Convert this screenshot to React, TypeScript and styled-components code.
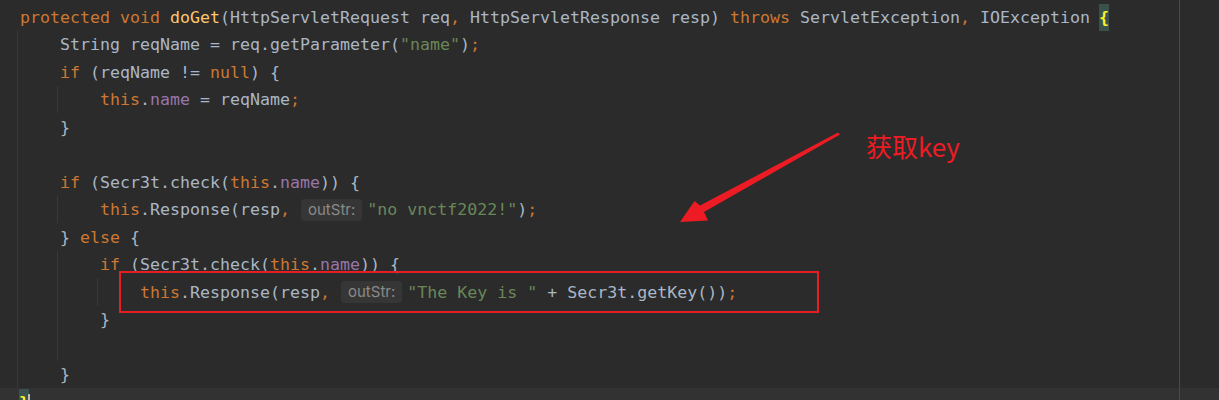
import React from "react";
import styled, { createGlobalStyle } from "styled-components";

type Kind = "kw" | "fn" | "txt" | "str" | "field";

type Token =
  | { k: Kind; t: string }
  | { k: "hint"; t: string }
  | { k: "brace"; t: string }
  | { k: "caret" };

interface LineData {
  indent: number;
  current?: boolean;
  tokens: Token[];
}

const LINE_H = 27.5;

const GlobalStyle = createGlobalStyle`
  html, body {
    margin: 0;
    padding: 0;
    background: #2b2b2b;
  }
  body {
    width: 1219px;
    height: 400px;
    overflow: hidden;
  }
`;

const colors: Record<Kind, string> = {
  kw: "#cc7832",
  fn: "#ffc66d",
  txt: "#a9b7c6",
  str: "#6a8759",
  field: "#9876aa",
};

const marginLine = (bg: string) =>
  `linear-gradient(to right, transparent 1179px, #494949 1179px, #494949 1180px, transparent 1180px), ${bg}`;

const Editor = styled.div`
  position: relative;
  width: 1219px;
  height: 400px;
  overflow: hidden;
  padding-top: 3px;
  box-sizing: border-box;
  background: ${marginLine("#2b2b2b")};
  font-family: "DejaVu Sans Mono", "Liberation Mono", monospace;
  font-size: 16.61px;
  color: #a9b7c6;
`;

const Line = styled.div<{ $current?: boolean }>`
  display: flex;
  align-items: stretch;
  height: ${LINE_H}px;
  line-height: ${LINE_H}px;
  padding-left: 17px;
  white-space: pre;
  background: ${(p) => (p.$current ? marginLine("#323232") : "transparent")};
`;

const Guide = styled.span`
  flex: 0 0 40px;
  box-sizing: border-box;
  border-left: 1px solid #393939;
`;

const Code = styled.span`
  display: flex;
  align-items: center;
  margin-left: 3px;
  padding-top: 1px;
`;

const Tok = styled.span<{ $kind: Kind }>`
  color: ${(p) => colors[p.$kind]};
`;

const Brace = styled.span`
  display: inline-block;
  width: 10px;
  height: ${LINE_H}px;
  margin-left: -1px;
  background: #3b514d;
  color: #ffef28;
  font-weight: bold;
`;

const Caret = styled.span`
  display: inline-block;
  width: 2px;
  height: 22px;
  margin-left: -1px;
  background: #bbbbbb;
  align-self: flex-end;
`;

const Hint = styled.span`
  display: inline-flex;
  align-items: center;
  height: 22px;
  margin: 0 5px 0 1px;
  padding: 0 7px;
  border-radius: 4px;
  background: #363636;
  color: #8a8a8a;
  font-family: Inter, "Noto Sans", sans-serif;
  font-size: 15px;
  line-height: 22px;
`;

const Highlight = styled.div`
  position: absolute;
  left: 119px;
  top: 271px;
  width: 700px;
  height: 42px;
  box-sizing: border-box;
  border: 2px solid #e81e25;
`;

const Arrow = styled.svg`
  position: absolute;
  left: 0;
  top: 0;
  pointer-events: none;
`;

const Label = styled.div`
  position: absolute;
  left: 866px;
  top: 127px;
  color: #ed1c24;
  font-family: "Noto Sans CJK SC", "Noto Sans", sans-serif;
  font-size: 26px;
  line-height: 38px;
  white-space: nowrap;
`;

const lines: LineData[] = [
  {
    indent: 0,
    tokens: [
      { k: "kw", t: "protected void " },
      { k: "fn", t: "doGet" },
      { k: "txt", t: "(HttpServletRequest req" },
      { k: "kw", t: ", " },
      { k: "txt", t: "HttpServletResponse resp) " },
      { k: "kw", t: "throws " },
      { k: "txt", t: "ServletException" },
      { k: "kw", t: ", " },
      { k: "txt", t: "IOException " },
      { k: "brace", t: "{" },
    ],
  },
  {
    indent: 1,
    tokens: [
      { k: "txt", t: "String reqName = req.getParameter(" },
      { k: "str", t: '"name"' },
      { k: "txt", t: ")" },
      { k: "kw", t: ";" },
    ],
  },
  {
    indent: 1,
    tokens: [
      { k: "kw", t: "if " },
      { k: "txt", t: "(reqName != " },
      { k: "kw", t: "null" },
      { k: "txt", t: ") {" },
    ],
  },
  {
    indent: 2,
    tokens: [
      { k: "kw", t: "this" },
      { k: "txt", t: "." },
      { k: "field", t: "name" },
      { k: "txt", t: " = reqName" },
      { k: "kw", t: ";" },
    ],
  },
  { indent: 1, tokens: [{ k: "txt", t: "}" }] },
  { indent: 1, tokens: [] },
  {
    indent: 1,
    tokens: [
      { k: "kw", t: "if " },
      { k: "txt", t: "(Secr3t.check(" },
      { k: "kw", t: "this" },
      { k: "txt", t: "." },
      { k: "field", t: "name" },
      { k: "txt", t: ")) {" },
    ],
  },
  {
    indent: 2,
    tokens: [
      { k: "kw", t: "this" },
      { k: "txt", t: ".Response(resp" },
      { k: "kw", t: ", " },
      { k: "hint", t: "outStr:" },
      { k: "str", t: '"no vnctf2022!"' },
      { k: "txt", t: ")" },
      { k: "kw", t: ";" },
    ],
  },
  {
    indent: 1,
    tokens: [
      { k: "txt", t: "} " },
      { k: "kw", t: "else" },
      { k: "txt", t: " {" },
    ],
  },
  {
    indent: 2,
    tokens: [
      { k: "kw", t: "if " },
      { k: "txt", t: "(Secr3t.check(" },
      { k: "kw", t: "this" },
      { k: "txt", t: "." },
      { k: "field", t: "name" },
      { k: "txt", t: ")) {" },
    ],
  },
  {
    indent: 3,
    tokens: [
      { k: "kw", t: "this" },
      { k: "txt", t: ".Response(resp" },
      { k: "kw", t: ", " },
      { k: "hint", t: "outStr:" },
      { k: "str", t: '"The Key is "' },
      { k: "txt", t: " + Secr3t.getKey())" },
      { k: "kw", t: ";" },
    ],
  },
  { indent: 2, tokens: [{ k: "txt", t: "}" }] },
  { indent: 2, tokens: [] },
  { indent: 1, tokens: [{ k: "txt", t: "}" }] },
  {
    indent: 0,
    current: true,
    tokens: [{ k: "brace", t: "}" }, { k: "caret" }],
  },
];

function renderToken(tok: Token, i: number) {
  if (tok.k === "hint") return <Hint key={i}>{tok.t}</Hint>;
  if (tok.k === "brace") return <Brace key={i}>{tok.t}</Brace>;
  if (tok.k === "caret") return <Caret key={i} />;
  return (
    <Tok key={i} $kind={tok.k}>
      {tok.t}
    </Tok>
  );
}

export default function App() {
  return (
    <>
      <GlobalStyle />
      <Editor>
        {lines.map((line, n) => (
          <Line key={n} $current={line.current}>
            {Array.from({ length: line.indent }).map((_, g) => (
              <Guide key={g} />
            ))}
            <Code>{line.tokens.map(renderToken)}</Code>
          </Line>
        ))}

        <Highlight />
        <Arrow width={1219} height={400} viewBox="0 0 1219 400">
          <polygon
            points="838,132.5 840,134.5 704,212 708,220.5 680,222 694.5,201 700,205.5"
            fill="#ed1c24"
          />
        </Arrow>
        <Label>获取key</Label>
      </Editor>
    </>
  );
}
